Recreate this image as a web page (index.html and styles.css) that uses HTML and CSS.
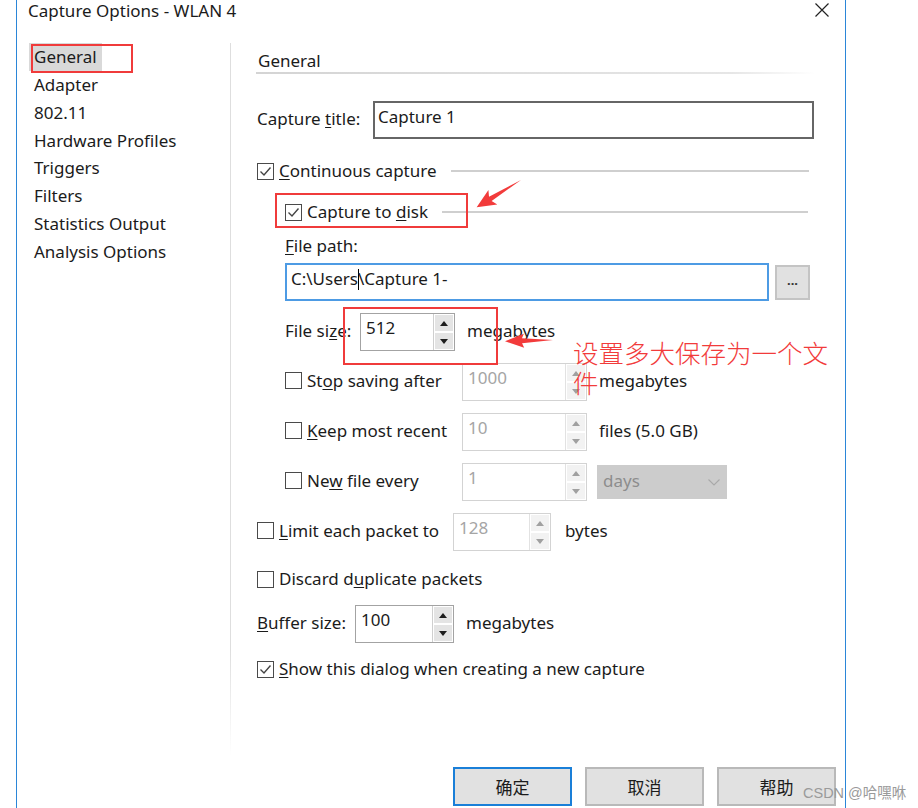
FILE: index.html
```html
<!DOCTYPE html>
<html lang="en">
<head>
    <meta charset="UTF-8">
    <meta name="viewport" content="width=device-width, initial-scale=1.0">
    <title>Capture Options - WLAN 4</title>
    <link rel="stylesheet" href="styles.css">
</head>
<body>

    <div class="window">
        <div class="titlebar">
            <span class="title">Capture Options - WLAN 4</span>
            <svg class="close" width="14" height="14" viewBox="0 0 14 14">
                <path d="M0.5 0.5L13.5 13.5M13.5 0.5L0.5 13.5" stroke="#222" stroke-width="1.2" fill="none"/>
            </svg>
        </div>

        <div class="main">
            <ul class="nav">
                <li><span class="nav-item selected">General</span></li>
                <li><span class="nav-item">Adapter</span></li>
                <li><span class="nav-item">802.11</span></li>
                <li><span class="nav-item">Hardware Profiles</span></li>
                <li><span class="nav-item">Triggers</span></li>
                <li><span class="nav-item">Filters</span></li>
                <li><span class="nav-item">Statistics Output</span></li>
                <li><span class="nav-item">Analysis Options</span></li>
            </ul>

            <div class="content">
                <div class="section-title">General</div>

                <div class="row title-row">
                    <span class="lbl lbl-title">Capture <u>t</u>itle:</span>
                    <div class="textbox">Capture 1</div>
                </div>

                <div class="check-row continuous-row">
                    <span class="checkbox"><svg width="15" height="15" viewBox="0 0 15 15"><path d="M2.5 7.5L6 11L12.5 3.5" stroke="#444" stroke-width="1.4" fill="none"/></svg></span>
                    <span class="check-text"><u>C</u>ontinuous capture</span>
                    <span class="rule"></span>
                </div>

                <!-- options that belong to Continuous capture -->
                <div class="disk-group">
                    <div class="check-row disk-row">
                        <span class="checkbox"><svg width="15" height="15" viewBox="0 0 15 15"><path d="M2.5 7.5L6 11L12.5 3.5" stroke="#444" stroke-width="1.4" fill="none"/></svg></span>
                        <span class="check-text">Capture to <u>d</u>isk</span>
                        <span class="rule disk-rule"></span>
                    </div>

                    <div class="path-label"><u>F</u>ile path:</div>
                    <div class="path-row">
                        <div class="pathbox">C:\Users<span class="caret"></span>\Capture 1-</div>
                        <button class="browse">...</button>
                    </div>

                    <div class="row">
                        <span class="lbl lbl-size">File si<u>z</u>e:</span>
                        <div class="spin spin-size">
                            <span class="spin-value">512</span>
                            <span class="spin-btns"><span class="spin-up"></span><span class="spin-down"></span></span>
                        </div>
                        <span class="unit">megabytes</span>
                    </div>

                    <div class="row">
                        <span class="lbl lbl-sub"><span class="checkbox"></span>St<u>o</u>p saving after</span>
                        <div class="spin spin-sub disabled">
                            <span class="spin-value">1000</span>
                            <span class="spin-btns"><span class="spin-up"></span><span class="spin-down"></span></span>
                        </div>
                        <span class="unit">megabytes</span>
                    </div>

                    <div class="row">
                        <span class="lbl lbl-sub"><span class="checkbox"></span><u>K</u>eep most recent</span>
                        <div class="spin spin-sub disabled">
                            <span class="spin-value">10</span>
                            <span class="spin-btns"><span class="spin-up"></span><span class="spin-down"></span></span>
                        </div>
                        <span class="unit">files (5.0 GB)</span>
                    </div>

                    <div class="row">
                        <span class="lbl lbl-sub"><span class="checkbox"></span>Ne<u>w</u> file every</span>
                        <div class="spin spin-sub disabled">
                            <span class="spin-value">1</span>
                            <span class="spin-btns"><span class="spin-up"></span><span class="spin-down"></span></span>
                        </div>
                        <div class="dropdown">
                            <span class="dropdown-text">days</span>
                            <svg width="12" height="7" viewBox="0 0 12 7"><path d="M0.5 0.5L6 6L11.5 0.5" stroke="#a9a9a9" stroke-width="1.1" fill="none"/></svg>
                        </div>
                    </div>
                </div>

                <div class="row">
                    <span class="lbl lbl-limit"><span class="checkbox"></span><u>L</u>imit each packet to</span>
                    <div class="spin spin-limit disabled">
                        <span class="spin-value">128</span>
                        <span class="spin-btns"><span class="spin-up"></span><span class="spin-down"></span></span>
                    </div>
                    <span class="unit unit-bytes">bytes</span>
                </div>

                <div class="check-row discard-row">
                    <span class="checkbox"></span>
                    <span class="check-text">Discard d<u>u</u>plicate packets</span>
                </div>

                <div class="row buffer-row">
                    <span class="lbl lbl-buffer"><u>B</u>uffer size:</span>
                    <div class="spin spin-buffer">
                        <span class="spin-value">100</span>
                        <span class="spin-btns"><span class="spin-up"></span><span class="spin-down"></span></span>
                    </div>
                    <span class="unit">megabytes</span>
                </div>

                <div class="check-row show-row">
                    <span class="checkbox"><svg width="15" height="15" viewBox="0 0 15 15"><path d="M2.5 7.5L6 11L12.5 3.5" stroke="#444" stroke-width="1.4" fill="none"/></svg></span>
                    <span class="check-text"><u>S</u>how this dialog when creating a new capture</span>
                </div>
            </div>
        </div>

        <div class="footer">
            <button class="btn default">确定</button>
            <button class="btn">取消</button>
            <button class="btn">帮助</button>
        </div>
    </div>

    <!-- red annotations drawn over the screenshot -->
    <div class="mark-box box-general"></div>
    <div class="mark-box box-disk"></div>
    <div class="mark-box box-size"></div>
    <svg class="arrows" width="918" height="808" viewBox="0 0 918 808">
        <polygon transform="translate(521 180) rotate(148.5)" points="0,0 36,-2.5 33,-8.5 52,0 33,8.5 36,2.5" fill="#f23b3b"/>
        <polygon transform="translate(553 340) rotate(178.5)" points="0,0 31,-2.5 29,-7 48,0 29,7 31,2.5" fill="#f23b3b"/>
    </svg>
    <div class="note">设置多大保存为一个文件</div>

    <div class="watermark">CSDN @哈嘿咻</div>

</body>
</html>
```

FILE: styles.css
```css
* {
    box-sizing: border-box;
}

body {
    margin: 0;
    width: 918px;
    height: 808px;
    overflow: hidden;
    position: relative;
    background-color: #fff;
    font-family: "Noto Sans", "Noto Sans CJK SC", sans-serif;
    font-size: 17px;
    color: #1b1b1b;
}

u {
    text-underline-offset: 2px;
}

.window {
    margin-left: 16px;
    width: 830px;
    height: 808px;
    border-left: 1px solid #2b86d8;
    border-right: 1px solid #2b86d8;
    display: flex;
    flex-direction: column;
}

.titlebar {
    height: 43px;
    display: flex;
    justify-content: space-between;
    align-items: flex-start;
    padding: 0 16px 0 11px;
}

.title {
    line-height: 21px;
}

.close {
    margin-top: 3px;
}

.main {
    display: flex;
    height: 712px;
}

.nav {
    width: 214px;
    margin: 0;
    padding: 0 0 0 12px;
    list-style: none;
    border-right: 1px solid;
    border-image: linear-gradient(#dedede 85%, rgba(222, 222, 222, 0)) 1;
}

.nav li {
    line-height: 27.86px;
}

.nav-item {
    display: inline-block;
    padding: 0 5px;
}

.nav-item.selected {
    background-color: #d9d9d9;
}

.content {
    flex: 1;
    padding: 7px 31px 0 26px;
    display: flex;
    flex-direction: column;
}

.section-title {
    line-height: 22px;
    padding-left: 2px;
    margin-left: -1px;
    border-bottom: 2px solid;
    border-image: linear-gradient(to right, #d4d4d4, #e6e6e6 85%, rgba(255, 255, 255, 0)) 1;
}

.row {
    display: flex;
    align-items: center;
    height: 38px;
    margin-top: 12px;
}

.title-row {
    margin-top: 27px;
}

.buffer-row {
    margin-top: 14px;
}

/* text sits a little high in the native dialog */
.lbl,
.unit,
.dropdown-text {
    padding-bottom: 4px;
}

.lbl {
    flex: none;
    white-space: nowrap;
}

.lbl .checkbox {
    display: inline-block;
    vertical-align: middle;
    margin-top: -3px;
}

.lbl-title { width: 116px; }
.lbl-size { width: 75px; }
.lbl-sub { width: 177px; }
.lbl-limit { width: 196px; }
.lbl-buffer { width: 98px; }

.textbox {
    flex: 1;
    height: 38px;
    border: 2px solid #666;
    padding: 2px 3px;
    line-height: 24px;
}

.check-row {
    display: flex;
    align-items: center;
    height: 24px;
}

.check-text {
    padding-bottom: 2px;
}

.continuous-row { margin-top: 20px; }
.disk-row { margin-top: 17px; }
.discard-row { margin-top: 16px; }
.show-row { margin-top: 14px; }

.checkbox {
    width: 17px;
    height: 17px;
    flex: none;
    border: 1px solid #4a4a4a;
    margin-right: 5px;
    background-color: #fff;
}

.checkbox svg {
    display: block;
}

.rule {
    flex: 1;
    height: 2px;
    background-color: #cfcfcf;
    margin: 0 5px 0 14px;
}

.disk-rule {
    margin-right: 6px;
}

.disk-group {
    padding-left: 28px;
}

.path-label {
    line-height: 24px;
    margin-top: 10px;
}

.path-row {
    display: flex;
    align-items: center;
    height: 38px;
    margin-top: 5px;
}

.pathbox {
    flex: 1;
    height: 38px;
    border: 2px solid #4d9be4;
    padding: 2px 4px;
    line-height: 24px;
}

.caret {
    display: inline-block;
    width: 1px;
    height: 21px;
    background-color: #000;
    vertical-align: -5px;
    margin-right: -1px;
}

.browse {
    width: 35px;
    height: 35px;
    margin: 0 4px 0 6px;
    padding: 0 0 5px;
    background-color: #e1e1e1;
    border: 2px solid #c4c4c4;
    font-family: inherit;
    font-size: 13px;
    font-weight: bold;
    color: #333;
}

.spin {
    display: flex;
    height: 38px;
    border: 1px solid #a3a3a3;
}

.spin-size { width: 95px; }
.spin-sub { width: 125px; }
.spin-limit { width: 98px; }
.spin-buffer { width: 99px; }

.spin-value {
    flex: 1;
    padding: 2px 0 0 5px;
    line-height: 24px;
}

.spin-btns {
    width: 21px;
    display: flex;
    flex-direction: column;
    gap: 2px;
    padding: 1px;
    border-left: 1px solid #cfcfcf;
}

.spin-up,
.spin-down {
    flex: 1;
    display: flex;
    align-items: center;
    justify-content: center;
    background-color: #e4e4e4;
}

.spin-up::after {
    content: "";
    border-left: 4px solid transparent;
    border-right: 4px solid transparent;
    border-bottom: 5px solid #1e1e1e;
}

.spin-down::after {
    content: "";
    border-left: 4px solid transparent;
    border-right: 4px solid transparent;
    border-top: 5px solid #1e1e1e;
}

.spin.disabled {
    border-color: #d3d3d3;
    color: #a5a5a5;
}

.spin.disabled .spin-btns {
    border-left-color: #e2e2e2;
}

.spin.disabled .spin-up,
.spin.disabled .spin-down {
    background-color: #f2f2f2;
}

.spin.disabled .spin-up::after {
    border-bottom-color: #a0a0a0;
}

.spin.disabled .spin-down::after {
    border-top-color: #a0a0a0;
}

.unit {
    margin-left: 12px;
}

.unit-bytes {
    margin-left: 14px;
}

.dropdown {
    width: 130px;
    height: 34px;
    margin-left: 10px;
    padding: 0 7px 0 6px;
    display: flex;
    align-items: center;
    justify-content: space-between;
    background-color: #cccccc;
    color: #8d8d8d;
}

.footer {
    display: flex;
    justify-content: flex-end;
    gap: 13px;
    padding: 12px 9px 0 0;
}

.btn {
    width: 119px;
    height: 39px;
    background-color: #e1e1e1;
    border: 2px solid #b9b9b9;
    font-family: "Noto Sans CJK SC", sans-serif;
    font-size: 17px;
    color: #1b1b1b;
}

.btn.default {
    border-color: #1a7fd8;
}

.mark-box {
    position: absolute;
    border: 2px solid #f03b3b;
}

.box-general {
    left: 31px;
    top: 44px;
    width: 102px;
    height: 29px;
}

.box-disk {
    left: 275px;
    top: 193px;
    width: 193px;
    height: 35px;
}

.box-size {
    left: 343px;
    top: 307px;
    width: 155px;
    height: 58px;
}

.arrows {
    position: absolute;
    left: 0;
    top: 0;
    pointer-events: none;
}

.note {
    position: absolute;
    left: 573px;
    top: 337px;
    width: 262px;
    font-family: "Noto Sans CJK SC", sans-serif;
    font-weight: 300;
    font-size: 25.5px;
    line-height: 30px;
    color: #f23b3b;
}

.watermark {
    position: absolute;
    left: 803px;
    top: 781px;
    font-family: "Liberation Sans", "Noto Sans CJK SC", sans-serif;
    font-size: 14.5px;
    color: #9a9a9a;
}
```
